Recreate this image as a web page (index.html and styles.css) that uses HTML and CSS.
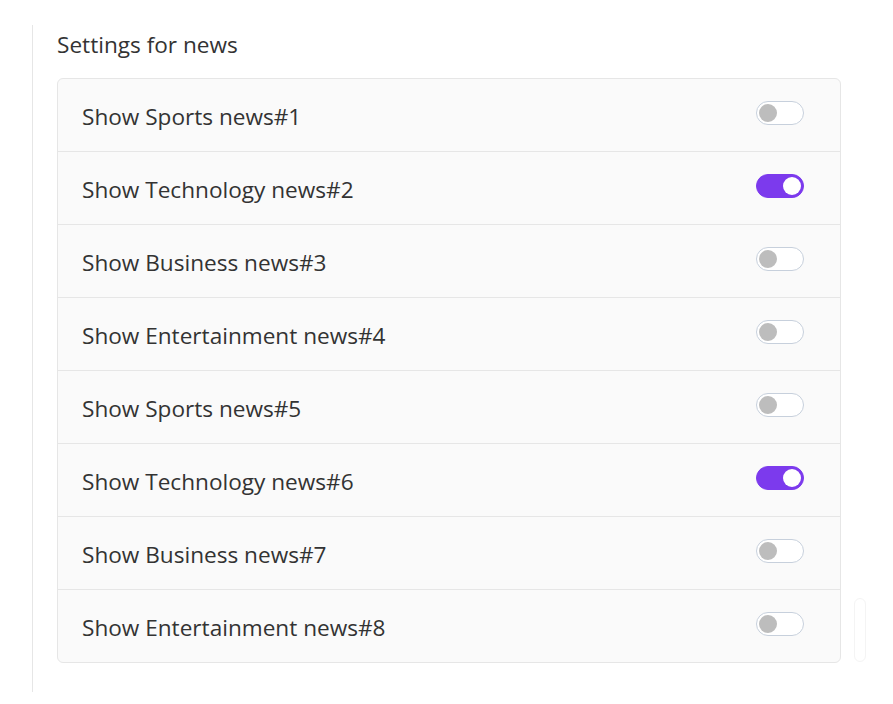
FILE: index.html
```html
<!DOCTYPE html>
<html>
<head>
<meta charset="utf-8">
<link rel="stylesheet" href="styles.css">
</head>
<body>
<div class="panel">
  <h2 class="title">Settings for news</h2>
  <div class="card">
    <div class="row"><span class="label">Show Sports news#1</span><span class="toggle"></span></div>
    <div class="row"><span class="label">Show Technology news#2</span><span class="toggle on"></span></div>
    <div class="row"><span class="label">Show Business news#3</span><span class="toggle"></span></div>
    <div class="row"><span class="label">Show Entertainment news#4</span><span class="toggle"></span></div>
    <div class="row"><span class="label">Show Sports news#5</span><span class="toggle"></span></div>
    <div class="row"><span class="label">Show Technology news#6</span><span class="toggle on"></span></div>
    <div class="row"><span class="label">Show Business news#7</span><span class="toggle"></span></div>
    <div class="row"><span class="label">Show Entertainment news#8</span><span class="toggle"></span></div>
  </div>
  <div class="ghost"></div>
</div>
</body>
</html>
```
FILE: styles.css
```css
html, body {
  margin: 0;
  padding: 0;
  background: #ffffff;
}
body {
  font-family: "Open Sans", "Noto Sans", sans-serif;
  color: #333333;
}
.panel {
  position: relative;
  margin: 25px 0 0 32px;
  height: 667px;
  border-left: 1px solid #e6e6e6;
  padding-left: 24px;
  box-sizing: border-box;
}
.title {
  margin: 0;
  padding-top: 5px;
  height: 47px;
  box-sizing: border-box;
  font-size: 22.6px;
  font-weight: 400;
  line-height: 30px;
  color: #333333;
}
.card {
  width: 784px;
  box-sizing: border-box;
  border: 1px solid #e6e6e6;
  border-radius: 6px;
  background: #fafafa;
  overflow: hidden;
  margin-top: 6px;
}
.row {
  display: flex;
  align-items: center;
  justify-content: space-between;
  height: 73px;
  box-sizing: border-box;
  padding: 0 36px 0 24px;
  border-bottom: 1px solid #e6e6e6;
}
.row:last-child {
  border-bottom: none;
  height: 72px;
}
.label {
  font-size: 22.6px;
  line-height: 30px;
  padding-top: 4px;
}
.toggle {
  position: relative;
  width: 48px;
  height: 24px;
  box-sizing: border-box;
  border: 1px solid #c7d0dc;
  border-radius: 12px;
  background: #ffffff;
  margin-bottom: 4px;
}
.toggle::after {
  content: "";
  position: absolute;
  left: 2px;
  top: 2px;
  width: 18px;
  height: 18px;
  border-radius: 50%;
  background: #bdbdbd;
}
.toggle.on {
  background: #7c3aed;
  border-color: #7c3aed;
}
.toggle.on::after {
  left: auto;
  right: 2px;
  background: #ffffff;
}
.ghost {
  position: absolute;
  left: 821px;
  top: 573px;
  width: 12px;
  height: 64px;
  box-sizing: border-box;
  border: 1px solid #f4f4f4;
  border-radius: 8px;
}
```
